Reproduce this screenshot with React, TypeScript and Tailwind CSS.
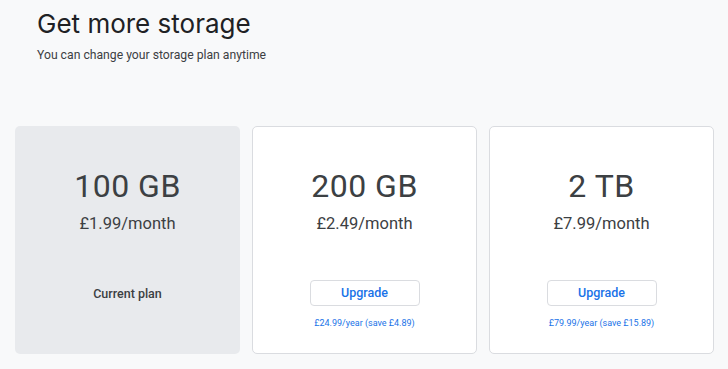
import React from "react";

type Plan = {
  size: string;
  price: string;
  current?: boolean;
  yearly?: string;
};

const plans: Plan[] = [
  { size: "100 GB", price: "£1.99/month", current: true },
  { size: "200 GB", price: "£2.49/month", yearly: "£24.99/year (save £4.89)" },
  { size: "2 TB", price: "£7.99/month", yearly: "£79.99/year (save £15.89)" },
];

function PlanCard({ plan }: { plan: Plan }) {
  return (
    <div
      className={
        plan.current
          ? "flex h-[228px] flex-col items-center rounded-[5px] bg-[#e8eaed] pt-[42px]"
          : "flex h-[228px] flex-col items-center rounded-[5px] border border-[#dadce0] bg-white pt-[41px]"
      }
    >
      <div className="text-[32px] leading-[36px] tracking-[0.5px] text-[#3c4043]">{plan.size}</div>
      <div className="mt-2 text-[16.5px] leading-[24px] text-[#3c4043]">{plan.price}</div>
      {plan.current ? (
        <div className="mt-[48px] text-[12.5px] font-medium leading-[20px] text-[#3c4043]">Current plan</div>
      ) : (
        <>
          <button
            type="button"
            className="mt-[44px] h-[26px] w-[110px] rounded-[4px] border border-[#dadce0] bg-white text-[12.5px] font-medium text-[#1a73e8]"
          >
            Upgrade
          </button>
          <div className="mt-[10px] text-[9px] leading-[15px] text-[#1a73e8]">{plan.yearly}</div>
        </>
      )}
    </div>
  );
}

export default function App() {
  return (
    <div
      className="h-[369px] w-[728px] overflow-hidden bg-[#f8f9fa] text-[#3c4043]"
      style={{ fontFamily: "Roboto, 'Noto Sans', sans-serif" }}
    >
      <div className="pl-[37px] pt-[8px]">
        <h1 className="font-['Inter',sans-serif] text-[26px] leading-[32px] text-[#202124]">Get more storage</h1>
        <p className="mt-[6px] text-[12.2px] leading-[18px] text-[#3c4043]">You can change your storage plan anytime</p>
      </div>
      <div className="mt-[62px] grid grid-cols-3 gap-[12px] pl-[15px] pr-[14px]">
        {plans.map((p) => (
          <PlanCard key={p.size} plan={p} />
        ))}
      </div>
    </div>
  );
}
